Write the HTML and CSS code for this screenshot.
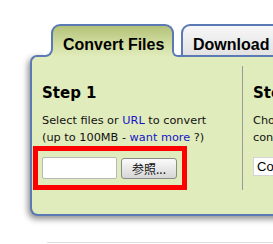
FILE: index.html
```html
<!DOCTYPE html>
<html lang="en">
<head>
<meta charset="utf-8">
<title>Convert Files</title>
<link rel="stylesheet" href="styles.css">
</head>
<body>
<div class="page">
  <div class="tabs">
    <div class="tab tab-active"><span class="tab-label">Convert Files</span></div>
    <div class="tab tab-idle"><span class="tab-text">Download</span></div>
  </div>
  <div class="panel">
    <div class="col col-first">
      <h2 class="step-title">Step 1</h2>
      <p class="step-text">Select files or <a class="link" href="#">URL</a> to convert<br>(up to 100MB - <a class="link" href="#">want more</a> ?)</p>
      <div class="upload-box">
        <input class="file-name" type="text" readonly>
        <button class="browse-btn" type="button">参照...</button>
      </div>
    </div>
    <div class="col col-second">
      <h2 class="step-title">Step 2</h2>
      <p class="step-text">Choose the format<br>convert to:</p>
      <div class="format-select">Convert to...</div>
    </div>
  </div>
  <div class="footer-line"></div>
</div>
</body>
</html>
```

FILE: styles.css
```css
html, body {
  margin: 0;
  padding: 0;
  background: #ffffff;
  overflow: hidden;
}

.page {
  width: 273px;
  height: 244px;
  overflow: hidden;
  padding-top: 24px;
  box-sizing: border-box;
}

.tabs {
  display: flex;
  align-items: flex-start;
  gap: 7px;
  padding-left: 51px;
  height: 31px;
}

.tab {
  flex: none;
  box-sizing: border-box;
  border: 2px solid #5b79b4;
  border-bottom: none;
  border-radius: 9px 9px 0 0;
  font-family: "Liberation Sans", Arial, sans-serif;
  font-weight: bold;
  font-size: 16px;
  line-height: 18px;
  color: #000;
  padding: 10px 0 0 10px;
  white-space: nowrap;
}

.tab-active {
  position: relative;
  z-index: 1;
  width: 123px;
  height: 33px;
  background: linear-gradient(#b4c279, #cfdc9e 55%, #e1ecbc);
}

.tab-idle {
  width: 130px;
  height: 31px;
  background: linear-gradient(#f7f7f7, #e2e2e2);
}

/* left flare where the active tab meets the panel */
.tab-active::before,
.tab-active::after,
.tab-label::before,
.tab-label::after {
  content: "";
  position: absolute;
  bottom: 0;
  box-sizing: border-box;
}

.tab-active::before {
  left: -10px;
  width: 10px;
  height: 10px;
  background: #e1ecbc;
}

.tab-active::after {
  left: -10px;
  width: 10px;
  height: 10px;
  background: #ffffff;
  border-right: 2px solid #5b79b4;
  border-bottom: 2px solid #5b79b4;
  border-bottom-right-radius: 8px;
}

.tab-label::before {
  right: -8px;
  width: 8px;
  height: 8px;
  background: #e1ecbc;
}

.tab-label::after {
  right: -8px;
  width: 8px;
  height: 8px;
  background: #ffffff;
  border-left: 2px solid #5b79b4;
  border-bottom: 2px solid #5b79b4;
  border-bottom-left-radius: 6px;
}

.panel {
  display: flex;
  align-items: flex-start;
  box-sizing: border-box;
  margin-left: 30px;
  width: 320px;
  height: 161px;
  background: #e1ecbc;
  border: 2px solid #5b79b4;
  border-right: none;
  border-radius: 7px 0 0 8px;
  box-shadow: -2px 3px 6px rgba(0, 0, 0, 0.45);
}

.col {
  box-sizing: border-box;
  margin-top: 9px;
  height: 124px;
  padding: 18px 0 0 10px;
  font-family: "DejaVu Sans", Verdana, sans-serif;
  color: #111;
}

.col-first {
  width: 211px;
  flex: none;
  border-right: 1px solid #9a9a9a;
}

.col-second {
  width: 120px;
  flex: none;
  white-space: nowrap;
}

.step-title {
  margin: 0 0 10px 0;
  font-size: 15px;
  line-height: 18px;
  font-weight: bold;
  color: #000;
}

.step-text {
  margin: 0;
  font-size: 11.3px;
  line-height: 17px;
}

.link {
  color: #1515c8;
  text-decoration: none;
}

.upload-box {
  display: flex;
  align-items: flex-start;
  box-sizing: border-box;
  margin-left: -9px;
  width: 154px;
  height: 44px;
  border: 5px solid #ff0000;
  padding: 6px 0 0 4px;
}

.file-name {
  box-sizing: border-box;
  width: 75px;
  height: 22px;
  margin: 0;
  padding: 0;
  border: 1px solid #b8b8b8;
  border-radius: 2px;
  background: #ffffff;
}

.browse-btn {
  box-sizing: border-box;
  width: 56px;
  height: 21px;
  margin: 1px 0 0 4px;
  padding: 0;
  border: 1px solid #8a8a8a;
  border-radius: 3px;
  background: linear-gradient(#fbfbfb, #e8e8e8 50%, #d6d6d6);
  font-family: "Noto Sans CJK JP", sans-serif;
  font-size: 12px;
  line-height: 17px;
  color: #111;
}

.format-select {
  box-sizing: border-box;
  width: 110px;
  height: 19px;
  margin-top: 11px;
  padding-left: 3px;
  background: #ffffff;
  border: 1px solid #d4d4d4;
  font-family: "Liberation Sans", Arial, sans-serif;
  font-size: 13px;
  line-height: 17px;
  color: #000;
}

.footer-line {
  margin: 26px 0 0 47px;
  border-top: 1px solid #dddddd;
}
```
